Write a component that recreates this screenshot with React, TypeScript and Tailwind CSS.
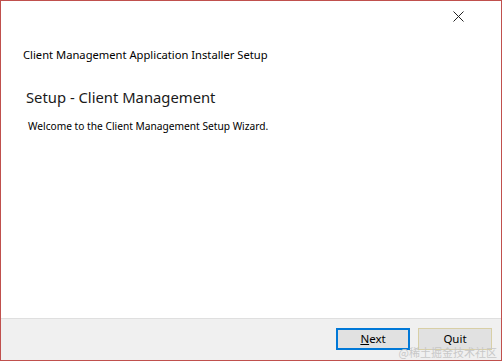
export default function App() {
  return (
    <div className="w-[502px] h-[361px] flex flex-col border border-[#c0504d] bg-white font-['Noto_Sans',sans-serif] text-black overflow-hidden relative">
      <div className="flex justify-end h-[36px] pr-[37px] pt-[10px]">
        <svg width="11" height="11" viewBox="0 0 11 11" className="stroke-[#222]">
          <path d="M0.5 0.5 L10.5 10.5 M10.5 0.5 L0.5 10.5" strokeWidth="1" fill="none" />
        </svg>
      </div>
      <div className="flex-1 flex flex-col">
        <div className="pl-[22px] pt-[10px] text-[11.2px] leading-[16px]">Client Management Application Installer Setup</div>
        <div className="pl-[25px] pt-[23px] text-[14.8px] leading-[22px] text-[#1a1a1a]">Setup - Client Management</div>
        <div className="pl-[27px] pt-[11px] text-[10.2px] leading-[15px]">Welcome to the Client Management Setup Wizard.</div>
      </div>
      <div className="h-[42px] bg-[#f0f0f0] border-t border-[#dfdfdf] flex justify-end items-start gap-[8px] pt-[9px] pr-[9px]">
        <button className="w-[74px] h-[22px] border-2 border-[#0078d7] bg-[#e1e1e1] text-[11.5px] leading-[16px]">
          <span className="underline">N</span>ext
        </button>
        <button className="w-[74px] h-[22px] border border-[#d8cfa6] bg-[#e1e1e1] text-[11.5px] leading-[16px]">Quit</button>
      </div>
      <div className="absolute right-[4px] bottom-[1px] text-[11px] leading-[13px] text-[#c8c8c8] font-['Noto_Sans_CJK_SC',sans-serif]">@稀土掘金技术社区</div>
    </div>
  )
}
